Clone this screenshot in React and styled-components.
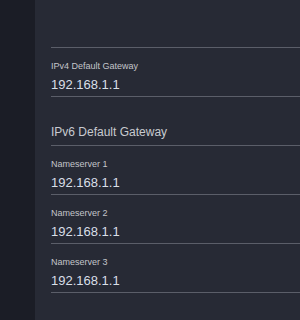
import React from "react";
import styled, { createGlobalStyle } from "styled-components";

const GlobalStyle = createGlobalStyle`
  html, body {
    margin: 0;
    padding: 0;
    background: #272a35;
  }
  body {
    font-family: "Liberation Sans", Arial, sans-serif;
  }
`;

const Page = styled.div`
  display: flex;
  width: 300px;
  height: 320px;
  overflow: hidden;
`;

const Sidebar = styled.div`
  width: 35px;
  flex-shrink: 0;
  background: #1b1d26;
`;

const Panel = styled.div`
  flex: 1;
  background: #272a35;
  padding: 47px 0 0 16px;
`;

const List = styled.div`
  border-top: 1px solid #5b5e69;
`;

const Field = styled.div`
  padding: 13px 0 3px;
  border-bottom: 1px solid #5b5e69;
`;

const Label = styled.div`
  font-size: 9px;
  line-height: 11px;
  color: #c3c5ca;
  margin-bottom: 5px;
  white-space: nowrap;
`;

const Value = styled.div`
  font-size: 13px;
  line-height: 16px;
  color: #d9dfe8;
`;

const Section = styled.div`
  padding: 28px 0 5px;
  border-bottom: 1px solid #5b5e69;
  font-size: 12px;
  line-height: 15px;
  color: #c8cad0;
`;

const fields = [
  { type: "field", label: "IPv4 Default Gateway", value: "192.168.1.1" },
  { type: "section", label: "IPv6 Default Gateway" },
  { type: "field", label: "Nameserver 1", value: "192.168.1.1" },
  { type: "field", label: "Nameserver 2", value: "192.168.1.1" },
  { type: "field", label: "Nameserver 3", value: "192.168.1.1" }
];

const App = () => {
  return (
    <Page>
      <GlobalStyle />
      <Sidebar />
      <Panel>
        <List>
          {fields.map(f =>
            f.type === "section" ? (
              <Section key={f.label}>{f.label}</Section>
            ) : (
              <Field key={f.label}>
                <Label>{f.label}</Label>
                <Value>{f.value}</Value>
              </Field>
            )
          )}
        </List>
      </Panel>
    </Page>
  );
};

export default App;
